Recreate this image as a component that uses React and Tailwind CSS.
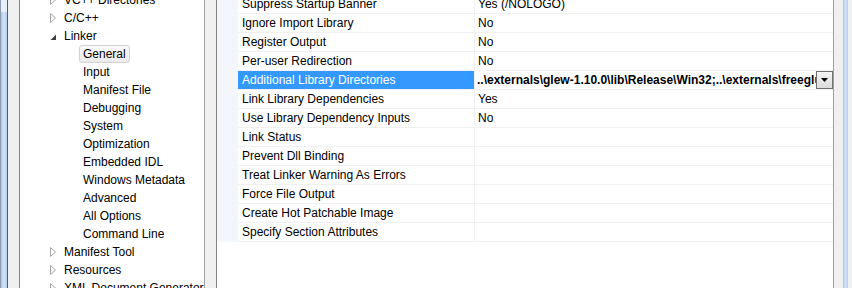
import React from 'react';

const tree = [
  { label: 'VC++ Directories', level: 1, icon: 'closed' },
  { label: 'C/C++', level: 1, icon: 'closed' },
  { label: 'Linker', level: 1, icon: 'open' },
  { label: 'General', level: 2, selected: true },
  { label: 'Input', level: 2 },
  { label: 'Manifest File', level: 2 },
  { label: 'Debugging', level: 2 },
  { label: 'System', level: 2 },
  { label: 'Optimization', level: 2 },
  { label: 'Embedded IDL', level: 2 },
  { label: 'Windows Metadata', level: 2 },
  { label: 'Advanced', level: 2 },
  { label: 'All Options', level: 2 },
  { label: 'Command Line', level: 2 },
  { label: 'Manifest Tool', level: 1, icon: 'closed' },
  { label: 'Resources', level: 1, icon: 'closed' },
  { label: 'XML Document Generator', level: 1, icon: 'closed' },
];

const props = [
  ['Suppress Startup Banner', 'Yes (/NOLOGO)'],
  ['Ignore Import Library', 'No'],
  ['Register Output', 'No'],
  ['Per-user Redirection', 'No'],
  ['Additional Library Directories', '..\\externals\\glew-1.10.0\\lib\\Release\\Win32;..\\externals\\freeglut\\lib;%(AdditionalLibraryDirectories)', true],
  ['Link Library Dependencies', 'Yes'],
  ['Use Library Dependency Inputs', 'No'],
  ['Link Status', ''],
  ['Prevent Dll Binding', ''],
  ['Treat Linker Warning As Errors', ''],
  ['Force File Output', ''],
  ['Create Hot Patchable Image', ''],
  ['Specify Section Attributes', ''],
];

function Arrow({ open }) {
  if (open) {
    return (
      <svg width="7" height="7" viewBox="0 0 7 7" className="mt-[3px]">
        <path d="M6 0.5 L6 6 L0.5 6 Z" fill="#404040" />
      </svg>
    );
  }
  return (
    <svg width="7" height="10" viewBox="0 0 7 10">
      <path d="M0.5 0.5 L5.5 5 L0.5 9.5 Z" fill="#fff" stroke="#a6a6a6" strokeWidth="1" />
    </svg>
  );
}

function TreeRow({ item }) {
  if (item.level === 1) {
    return (
      <div className="h-[18px] flex items-center pl-[30px]">
        <div className="w-[14px] flex items-center">
          <Arrow open={item.icon === 'open'} />
        </div>
        <span>{item.label}</span>
      </div>
    );
  }
  return (
    <div className="h-[18px] flex items-center pl-[59px]">
      {item.selected ? (
        <span className="h-[18px] flex items-center px-[3px] border border-[#d2d2d2] rounded-[3px] bg-gradient-to-b from-[#fbfbfb] to-[#ebebeb]">
          {item.label}
        </span>
      ) : (
        <span className="pl-[4px]">{item.label}</span>
      )}
    </div>
  );
}

function PropRow({ name, value, selected }) {
  return (
    <div className="h-[19px] flex">
      <div className="w-[21px] shrink-0 bg-[#f3f6fb]" />
      <div
        className={`w-[237px] shrink-0 flex items-center pl-[4px] border-b border-r border-r-[#f0f0f0] ${
          selected ? 'bg-[#3399ff] text-white border-b-[#f0f0f0]' : 'border-b-[#f0f0f0]'
        }`}
      >
        {name}
      </div>
      <div className="flex-1 min-w-0 flex items-center border-b border-[#f0f0f0]">
        {selected ? (
          <>
            <span className="flex-1 min-w-0 overflow-hidden whitespace-nowrap pl-[2px] font-bold">{value}</span>
            <div className="w-[17px] h-[18px] shrink-0 border border-[#707070] bg-gradient-to-b from-[#f4f4f4] to-[#dcdcdc] flex items-center justify-center">
              <svg width="7" height="4" viewBox="0 0 7 4">
                <path d="M0 0 L7 0 L3.5 4 Z" fill="#000" />
              </svg>
            </div>
          </>
        ) : (
          <span className="pl-[3px] whitespace-nowrap">{value}</span>
        )}
      </div>
    </div>
  );
}

export default function App() {
  return (
    <div
      className="w-[852px] h-[288px] flex overflow-hidden bg-white text-[12px] text-black"
      style={{ fontFamily: '"Liberation Sans", Arial, sans-serif' }}
    >
      {/* left window edge */}
      <div className="w-[1px] shrink-0 bg-[#8c9bb0]" />
      <div className="w-[6px] shrink-0 flex flex-col">
        <div className="h-[12px] bg-[#e6eef8]" />
        <div className="flex-1 bg-gradient-to-r from-[#a9c7ec] via-[#d4e4f7] to-[#b3cdee]" />
      </div>
      <div className="w-[1px] shrink-0 bg-[#5a5a5a]" />
      <div className="w-[11px] shrink-0 bg-[#f0f0f0]" />
      <div className="w-[1px] shrink-0 bg-[#828790]" />

      {/* tree */}
      <div className="w-[184px] shrink-0 overflow-hidden">
        <div className="-mt-[9px]">
          {tree.map((item) => (
            <TreeRow key={item.label} item={item} />
          ))}
        </div>
      </div>

      {/* splitter */}
      <div className="w-[1px] shrink-0 bg-[#a0a0a0]" />
      <div className="w-[11px] shrink-0 bg-[#f0f0f0]" />
      <div className="w-[1px] shrink-0 bg-[#828282]" />

      {/* property grid */}
      <div className="w-[616px] shrink-0 overflow-hidden">
        <div className="-mt-[5px]">
          {props.map(([n, v, s]) => (
            <PropRow key={n} name={n} value={v} selected={s} />
          ))}
        </div>
      </div>

      {/* right edge */}
      <div className="w-[1px] shrink-0 bg-[#a0a0a0]" />
      <div className="w-[9px] shrink-0 bg-[#f0f0f0]" />
      <div className="w-[5px] shrink-0 bg-gradient-to-r from-[#a9c7ec] via-[#d4e4f7] to-[#b3cdee]" />
      <div className="flex-1 bg-[#f0f0f0]" />
    </div>
  );
}
